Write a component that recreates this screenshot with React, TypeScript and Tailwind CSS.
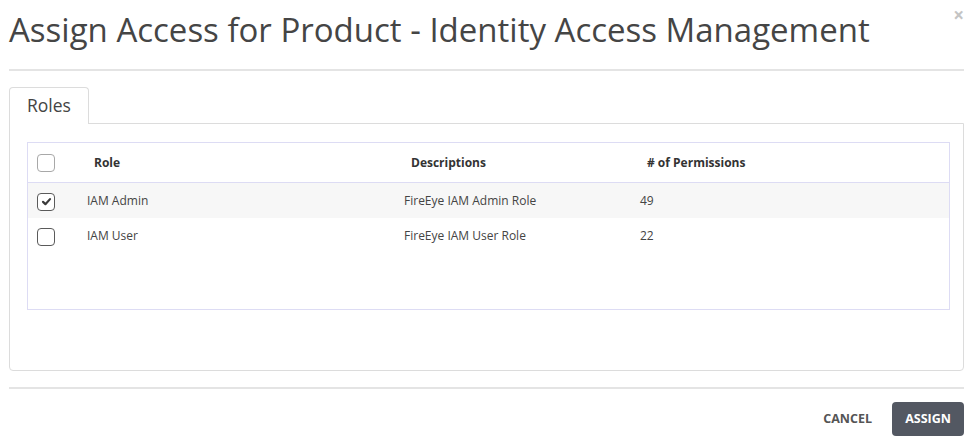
import React from "react";

type Role = { name: string; description: string; permissions: number; checked: boolean };

const roles: Role[] = [
  { name: "IAM Admin", description: "FireEye IAM Admin Role", permissions: 49, checked: true },
  { name: "IAM User", description: "FireEye IAM User Role", permissions: 22, checked: false },
];

function Checkbox({ checked, light }: { checked?: boolean; light?: boolean }) {
  return (
    <span
      className={
        "flex h-[18px] w-[18px] items-center justify-center rounded-[4px] border-[1.5px] bg-white " +
        (light ? "border-[#a8a8a8]" : "border-[#5a5a5a]")
      }
    >
      {checked && (
        <svg viewBox="0 0 12 12" className="h-[11px] w-[11px]" aria-hidden="true">
          <path d="M2.2 6.4 L4.8 8.9 L9.8 3.4" fill="none" stroke="#3a3a3a" strokeWidth="2.4" strokeLinecap="round" strokeLinejoin="round" />
        </svg>
      )}
    </span>
  );
}

export default function App() {
  return (
    <div className="relative h-[443px] w-[975px] overflow-hidden bg-white pl-[9px] pr-[11px] font-['Open_Sans',sans-serif]">
      {/* close */}
      <button className="absolute right-[11px] top-[4px] text-[19px] font-bold leading-[22px] text-[#c4c4c4]">×</button>

      {/* title */}
      <div className="border-b-2 border-[#e4e4e4] pb-[17px] pt-[8px]">
        <h1 className="text-[33px] font-normal leading-[44px] text-[#454545]">
          Assign Access for Product - Identity Access Management
        </h1>
      </div>

      {/* tabs */}
      <div className="mt-[16px] flex">
        <div className="relative z-10 -mb-px h-[37px] rounded-t-[4px] border border-b-0 border-[#dcdcdc] bg-white px-[17px] pt-[5px] text-[17.5px] leading-[24px] text-[#444]">
          Roles
        </div>
      </div>

      {/* tab panel */}
      <div className="rounded-b-[4px] border border-[#dcdcdc] pb-[60px] pl-[17px] pr-[13px] pt-[18px]">
        <div className="h-[168px] border border-[#dddcf4]">
          <div className="grid h-[40px] grid-cols-[59px_317px_236px_1fr] items-center border-b border-[#dddcf4] text-[12px] font-bold text-[#333]">
            <div className="pl-[9px] pt-px">
              <Checkbox light />
            </div>
            <div className="pl-[7px]">Role</div>
            <div className="pl-[7px]">Descriptions</div>
            <div className="pl-[7px]"># of Permissions</div>
          </div>
          {roles.map((r, i) => (
            <div
              key={r.name}
              className={
                "grid h-[35px] grid-cols-[59px_317px_236px_1fr] items-center text-[12px] text-[#444] " +
                (i === 0 ? "bg-[#f7f7f7]" : "bg-white")
              }
            >
              <div className="pl-[9px] pt-[2px]">
                <Checkbox checked={r.checked} />
              </div>
              <div className="pt-px">{r.name}</div>
              <div className="pt-px">{r.description}</div>
              <div className="pt-px">{r.permissions}</div>
            </div>
          ))}
        </div>
      </div>

      {/* footer */}
      <div className="mt-[16px] border-t-2 border-[#e4e4e4] pt-[13px]">
        <div className="flex items-center justify-end gap-[6px]">
          <button className="h-[34px] px-[14px] text-[12.5px] font-bold text-[#555]">CANCEL</button>
          <button className="h-[34px] w-[72px] rounded-[4px] bg-[#535862] text-[12.5px] font-bold text-white">
            ASSIGN
          </button>
        </div>
      </div>
    </div>
  );
}
